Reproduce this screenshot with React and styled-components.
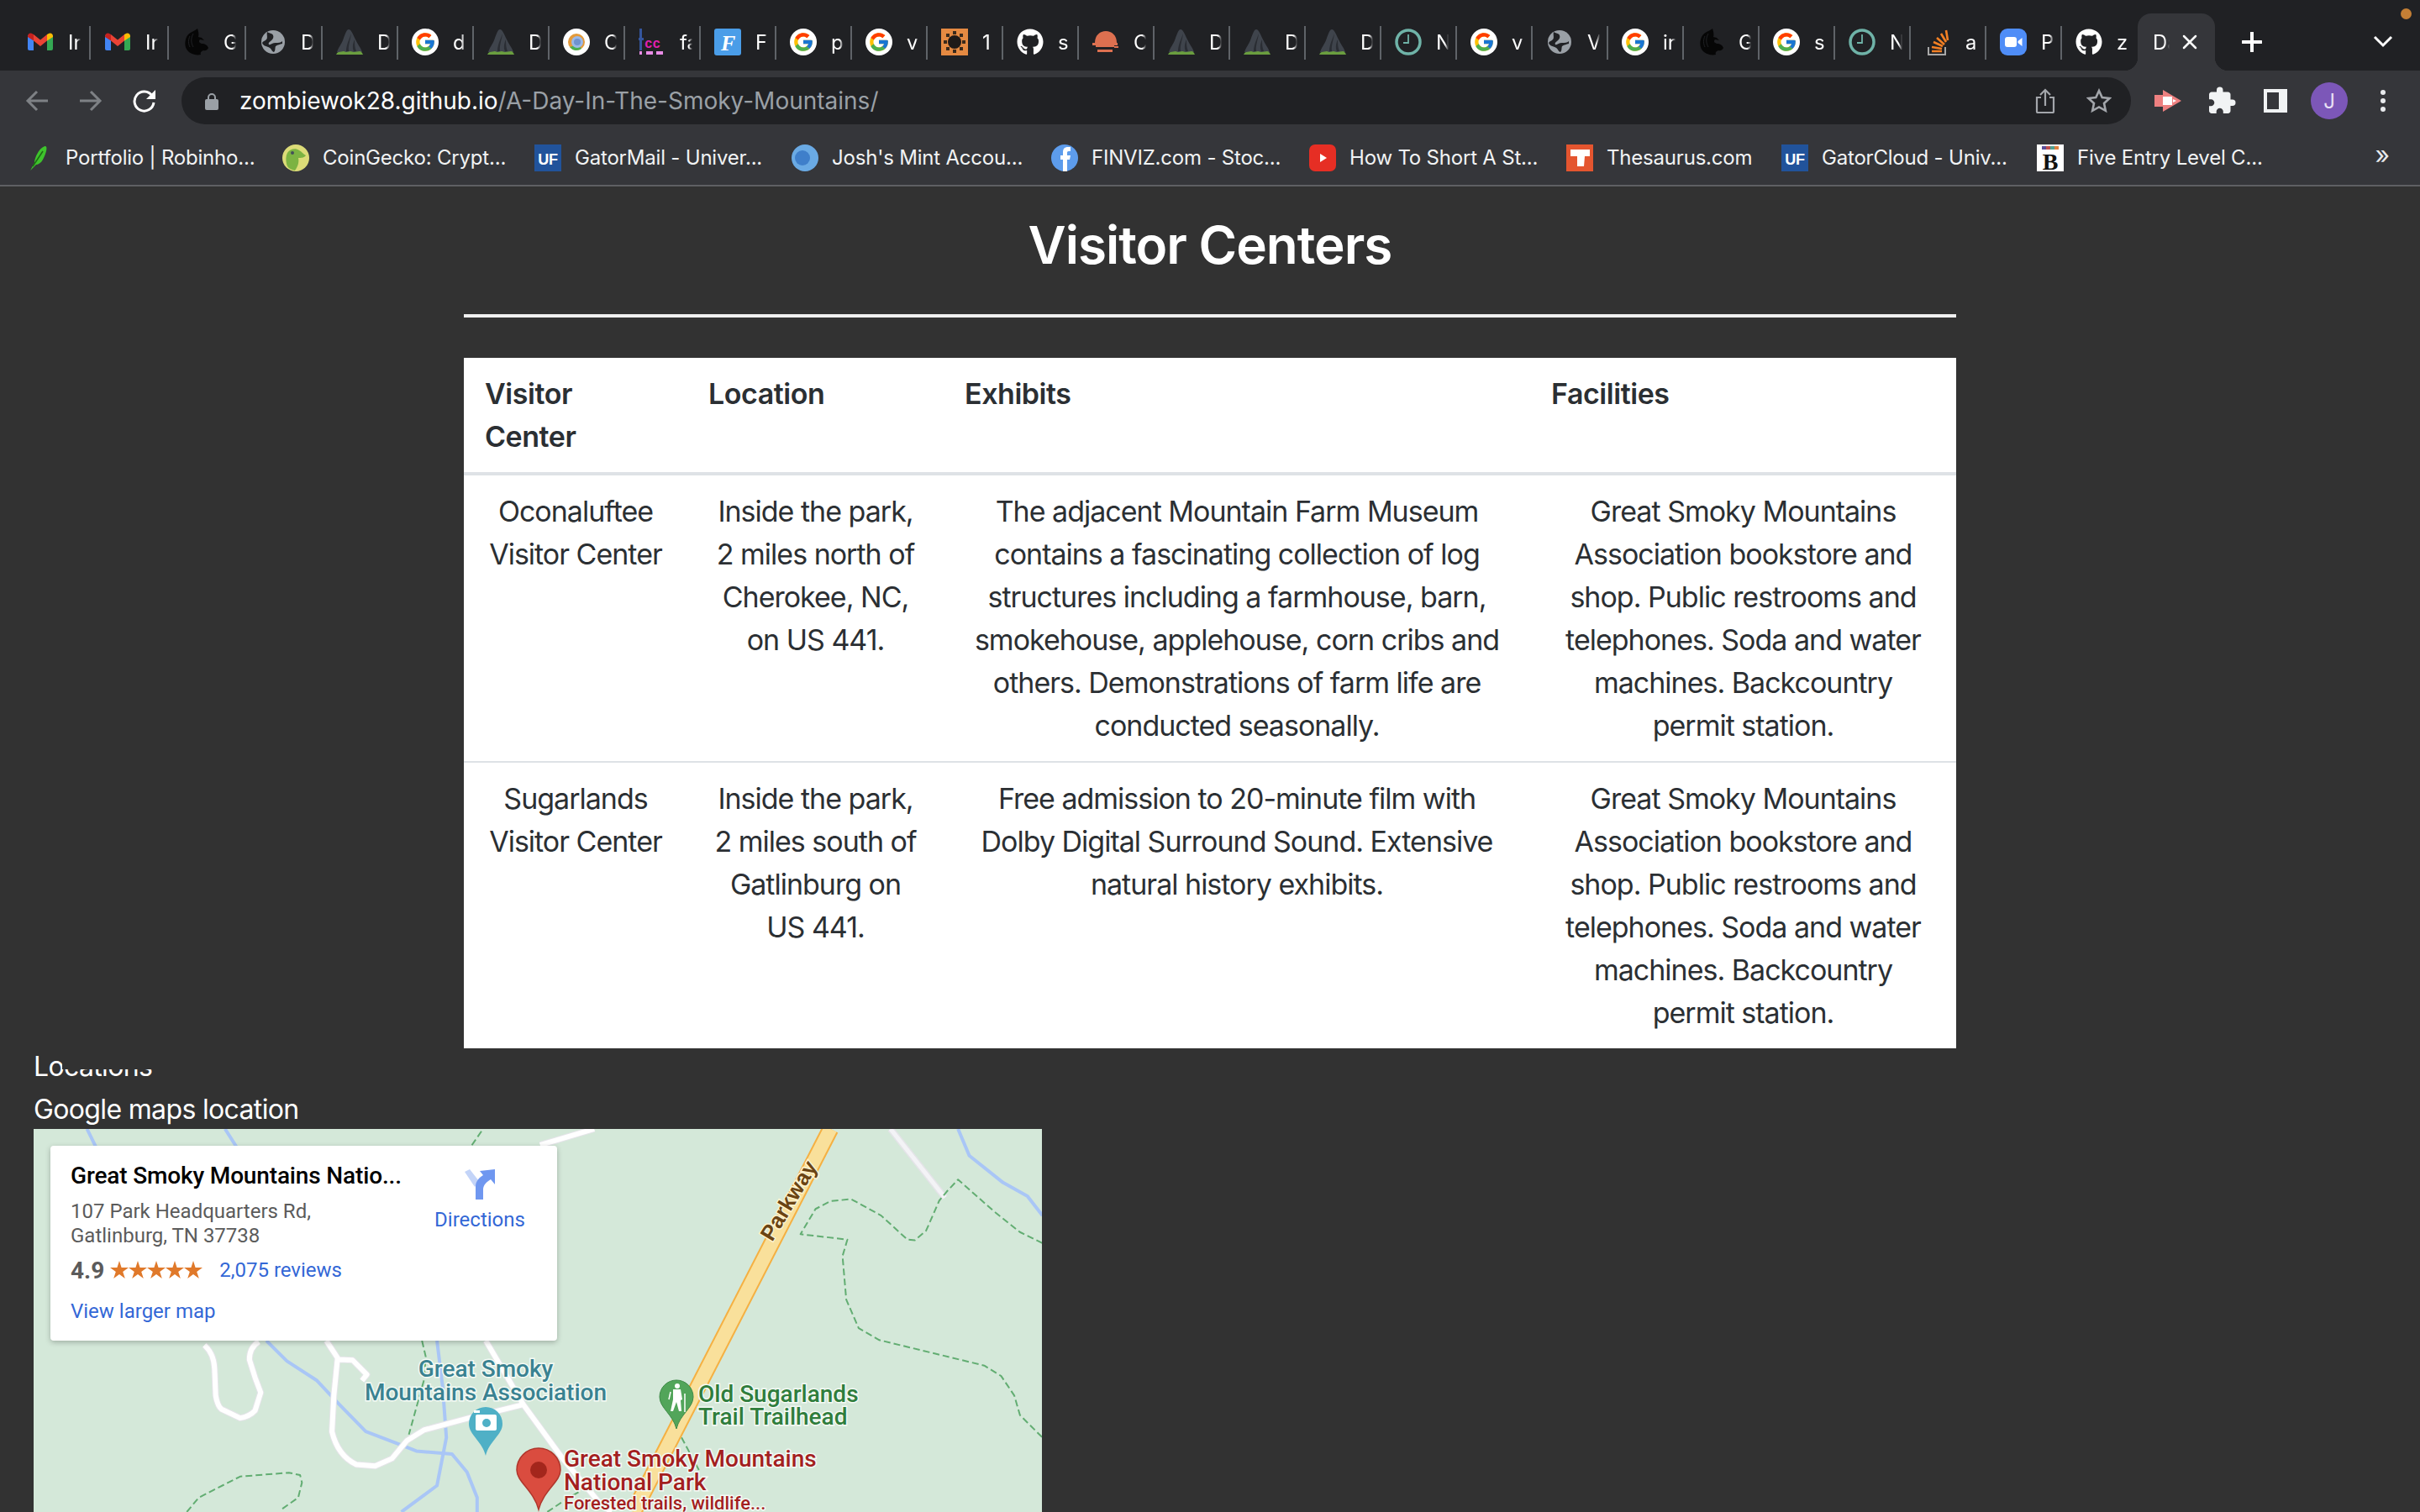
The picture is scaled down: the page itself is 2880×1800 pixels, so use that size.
import styled, { createGlobalStyle } from 'styled-components'
import { FcGoogle } from 'react-icons/fc'
import { FaGithub } from 'react-icons/fa'
import { MdExtension } from 'react-icons/md'

const GlobalStyle = createGlobalStyle`
  html, body {
    margin: 0;
    padding: 0;
    height: 1800px;
    overflow: hidden;
    background: #323232;
    font-family: Inter, "Noto Sans", sans-serif;
    color: #fff;
  }
  * { box-sizing: border-box; }
`

/* ---------- favicons ---------- */

const Icon = styled.svg`
  width: 32px;
  height: 32px;
  flex: none;
  display: block;
`

const Gmail = () => (
  <Icon viewBox="0 0 32 32">
    <path fill="#4285f4" d="M1 8h7v18H3a2 2 0 0 1-2-2z" />
    <path fill="#34a853" d="M24 8h7v16a2 2 0 0 1-2 2h-5z" />
    <path fill="#ea4335" d="M8 7l8 6.5L24 7v7.5L16 21l-8-6.5z" />
    <path fill="#c5221f" d="M1 10V9a3.5 3.5 0 0 1 5.6-2.8L8 7v7.5z" />
    <path fill="#fbbc04" d="M31 10V9a3.5 3.5 0 0 0-5.6-2.8L24 7v7.5z" />
  </Icon>
)

const UfDragon = () => (
  <Icon viewBox="0 0 32 32">
    <path fill="#060606" d="M18 0c-3 3-10 4-13 10-3 7-2 14 3 18 4 3 10 4 14 3-1-2 0-4 3-5 3 1 5-1 6-3-1-3-4-5-8-5-3-1-4-3-2-5l5 1-3-3-4-1c1-3 0-7-1-10z" />
    <path fill="none" stroke="#202124" strokeWidth="1" d="M9 9c-2 4-2 9 0 13M13 6c-3 5-3 11 0 16" />
  </Icon>
)

const Globe = () => (
  <Icon viewBox="0 0 32 32">
    <circle cx="16" cy="16" r="14" fill="#9aa0a6" />
    <path fill="#202124" d="M9 4c2 2 6 1 7 4 1 2 0 5-3 7-2 1-3 3-2 4 2 1 4-2 8-2 3 0 6 0 8-2v3c-3 1-5 1-8 3-1 3 0 5-2 7-2 0-3-4-5-5-3-2-8-2-9-6 1-2 3-2 5-4 2-2 0-6 1-9z" />
  </Icon>
)

const Mountain = () => (
  <Icon viewBox="0 0 32 32">
    <path fill="#3f444c" d="M15 1c3 0 5 6 8 12 2 5 6 9 8 15H1c2-6 5-9 7-14 2-5 4-13 7-13z" />
    <path fill="#2a2d33" d="M18 6c-2 6-6 13-6 21h3c-1-7 2-13 3-21zM22 13c-2 5-3 9-1 14h3c-2-5-2-9-2-14z" />
    <path fill="#6a9e3f" d="M0 31c1-2 2-3 3-3l6-1 3 1 5-1 4 1 7-1c2 0 3 2 4 4z" />
  </Icon>
)

const WhiteDisc = styled.span`
  width: 32px;
  height: 32px;
  flex: none;
  border-radius: 50%;
  background: #fff;
  display: flex;
  align-items: center;
  justify-content: center;
`

const GoogleG = () => (
  <WhiteDisc>
    <FcGoogle size={26} />
  </WhiteDisc>
)

const ChromeDev = () => (
  <Icon viewBox="0 0 32 32">
    <circle cx="16" cy="16" r="16" fill="#fff" />
    <circle cx="16" cy="16" r="10" fill="#e39a3a" />
    <path fill="#4caf50" d="M8 22a10 10 0 0 0 14 2l-4-5z" />
    <circle cx="17" cy="16" r="7" fill="#9ab8e8" />
    <circle cx="17" cy="16" r="4" fill="#6f93cf" />
  </Icon>
)

const FccLogo = () => (
  <Icon viewBox="0 0 32 32">
    <rect x="1" y="0" width="3" height="26" fill="#34559c" />
    <rect x="0" y="11" width="6" height="3" fill="#34559c" />
    <rect x="1" y="27" width="3" height="4" fill="#e98ce6" />
    <text x="7" y="23" fontSize="16" fontWeight="700" fill="#e020b0" fontFamily="Liberation Mono, monospace">cc</text>
    <rect x="9" y="27" width="8" height="4" fill="#e98ce6" />
    <rect x="21" y="27" width="8" height="4" fill="#e98ce6" />
  </Icon>
)

const BlueF = () => (
  <Icon viewBox="0 0 32 32">
    <rect width="32" height="32" rx="3" fill="#4a9de8" />
    <text x="8" y="26" fontSize="26" fontWeight="700" fontStyle="italic" fill="#fff" fontFamily="Liberation Serif, serif">F</text>
  </Icon>
)

const OrangeSun = () => (
  <Icon viewBox="0 0 32 32">
    <rect width="32" height="32" fill="#e58a42" />
    <circle cx="16" cy="16" r="8" fill="#1f1a18" />
    <g fill="#3a2a1c">
      <rect x="14" y="3" width="4" height="4" />
      <rect x="14" y="25" width="4" height="4" />
      <rect x="3" y="14" width="4" height="4" />
      <rect x="25" y="14" width="4" height="4" />
      <rect x="6" y="6" width="4" height="4" />
      <rect x="22" y="6" width="4" height="4" />
      <rect x="6" y="22" width="4" height="4" />
      <rect x="22" y="22" width="4" height="4" />
    </g>
  </Icon>
)

const Github = () => <FaGithub size={32} color="#fff" style={{ flex: 'none' }} />

const Sunset = () => (
  <Icon viewBox="0 0 32 32">
    <path fill="#dd7050" d="M3 17C3 8 9 3 16 3s13 5 13 14z" />
    <rect x="0" y="17" width="30" height="3" fill="#dd7050" />
    <rect x="4" y="20" width="22" height="2" fill="#dd7050" />
    <rect x="26" y="21" width="5" height="2" fill="#dd7050" />
    <rect x="6" y="25" width="18" height="3" fill="#dd7050" />
  </Icon>
)

const Clock = () => (
  <Icon viewBox="0 0 32 32">
    <circle cx="16" cy="16" r="14" fill="none" stroke="#6fb3a8" strokeWidth="3.5" />
    <path d="M16 7v10h-6" fill="none" stroke="#6fb3a8" strokeWidth="1.8" />
  </Icon>
)

const Stack = () => (
  <Icon viewBox="0 0 32 32">
    <path d="M5 22v9h20v-9" fill="none" stroke="#a8a8a8" strokeWidth="2" />
    <g stroke="#f48024" strokeWidth="2.6">
      <path d="M9 27h12M9 22l12 2M11 16l11 5M15 11l9 8M20 6l6 10M26 2l2 12" />
    </g>
  </Icon>
)

const ZoomLogo = () => (
  <Icon viewBox="0 0 32 32">
    <rect width="32" height="32" rx="9" fill="#4f8df7" />
    <rect x="6" y="10" width="14" height="12" rx="3" fill="#fff" />
    <path fill="#fff" d="M21.5 15l5-4v10l-5-4z" />
  </Icon>
)

const Leaf = () => (
  <Icon viewBox="0 0 32 32">
    <path fill="#3ec42c" d="M24 2c3 0 1 9-3 16-2 4-6 6-8 6l-7 7 5-9c0-6 6-19 13-20z" />
    <path stroke="#1d6a14" strokeWidth="1.5" fill="none" d="M9 26L21 8" />
  </Icon>
)

const Gecko = () => (
  <Icon viewBox="0 0 32 32">
    <circle cx="16" cy="16" r="16" fill="#dcdc78" />
    <path fill="#7cb342" d="M6 10c3-5 10-6 14-3 3 1 5 5 8 6-2 3-6 3-9 3 1 4 0 10-4 15-5-1-9-3-10-8-1-5-1-9 1-13z" />
    <circle cx="12" cy="10" r="2" fill="#44505a" />
  </Icon>
)

const UfSquare = () => (
  <Icon viewBox="0 0 32 32">
    <rect width="32" height="32" fill="#21539b" />
    <text x="16" y="24" textAnchor="middle" fontSize="18" fontWeight="700" fill="#fff" fontFamily="Liberation Sans, sans-serif">UF</text>
  </Icon>
)

const Mint = () => (
  <Icon viewBox="0 0 32 32">
    <circle cx="16" cy="16" r="16" fill="#6aaae4" />
    <circle cx="13" cy="16" r="9" fill="#3f7fca" />
  </Icon>
)

const Finviz = () => (
  <Icon viewBox="0 0 32 32">
    <circle cx="16" cy="16" r="16" fill="#5d9cec" />
    <path fill="#fff" d="M14 32V18h-3v-5h3V9c0-4 2-6 6-6h3v5h-2c-2 0-2 1-2 2v3h4l-1 5h-3v14z" />
  </Icon>
)

const Youtube = () => (
  <Icon viewBox="0 0 32 32">
    <rect x="0" y="0" width="32" height="32" rx="7" fill="#e62e24" />
    <path fill="#fff" d="M13 11l8 5-8 5z" />
  </Icon>
)

const Thesaurus = () => (
  <Icon viewBox="0 0 32 32">
    <rect width="32" height="32" fill="#e4552f" />
    <path fill="#fff" d="M5 6h23v8h-6l-1 12h-8V14H5z" />
  </Icon>
)

const BookB = () => (
  <Icon viewBox="0 0 32 32">
    <rect width="32" height="32" fill="#fff" />
    <rect x="6" y="2" width="5" height="4" fill="#5a4f9a" />
    <rect x="11" y="2" width="5" height="4" fill="#c05050" />
    <rect x="16" y="2" width="5" height="4" fill="#50a090" />
    <rect x="21" y="2" width="5" height="4" fill="#e08040" />
    <text x="16" y="30" textAnchor="middle" fontSize="28" fontWeight="700" fill="#111" fontFamily="Liberation Serif, serif">B</text>
  </Icon>
)

/* ---------- tab strip ---------- */

const TabStrip = styled.div`
  position: relative;
  height: 84px;
  background: #202124;
  padding: 16px 0 0 16px;
  display: flex;
  align-items: stretch;
`

const Tab = styled.div`
  position: relative;
  width: ${({ $w }) => $w}px;
  flex: none;
  display: flex;
  align-items: center;
  gap: 17px;
  padding-left: 16px;

  &::after {
    content: '';
    display: ${({ $last }) => ($last ? 'none' : 'block')};
    position: absolute;
    right: 0;
    top: 15px;
    width: 2px;
    height: 40px;
    background: #5f6368;
  }
`

const TabTitle = styled.span`
  width: 15px;
  overflow: hidden;
  white-space: nowrap;
  font-size: 24px;
  color: #fff;
  -webkit-mask-image: linear-gradient(to right, #000 70%, transparent);
  mask-image: linear-gradient(to right, #000 70%, transparent);
`

const ActiveTab = styled.div`
  position: relative;
  width: 92px;
  flex: none;
  background: #35363a;
  border-radius: 16px 16px 0 0;
  display: flex;
  align-items: center;
  padding-left: 18px;

  &::before, &::after {
    content: '';
    position: absolute;
    bottom: 0;
    width: 16px;
    height: 16px;
  }
  &::before {
    left: -16px;
    background: radial-gradient(circle at 0 0, transparent 16px, #35363a 16.5px);
  }
  &::after {
    right: -16px;
    background: radial-gradient(circle at 100% 0, transparent 16px, #35363a 16.5px);
  }
`

const ActiveTitle = styled(TabTitle)`
  width: 20px;
  margin-right: 14px;
`

const StripGlyph = styled.svg`
  flex: none;
  display: block;
`

const NewTab = styled(StripGlyph)`
  margin: 22px 0 0 32px;
`

const TabSearch = styled(StripGlyph)`
  position: absolute;
  left: 2818px;
  top: 37px;
`

const WindowDot = styled.span`
  position: absolute;
  left: 2857px;
  top: 10px;
  width: 13px;
  height: 13px;
  border-radius: 50%;
  background: #c47f35;
`

/* ---------- toolbar ---------- */

const Toolbar = styled.div`
  height: 64px;
  background: #35363a;
  padding: 8px 12px 0;
  display: flex;
  align-items: stretch;
`

const ToolButton = styled.div`
  width: 64px;
  flex: none;
  display: flex;
  align-items: center;
  justify-content: center;
`

const AddressBar = styled.div`
  flex: 1;
  margin: 0 12px;
  border-radius: 28px;
  background: #202124;
  display: flex;
  align-items: center;
  padding: 0 6px 0 28px;
`

const Url = styled.div`
  flex: 1;
  margin-left: 25px;
  font-size: 28px;
  color: #fff;
  white-space: nowrap;
`

const UrlPath = styled.span`
  color: #9aa0a6;
`

const Avatar = styled.span`
  width: 44px;
  height: 44px;
  border-radius: 50%;
  background: #7c57b8;
  color: #e8e0f5;
  font-size: 24px;
  display: flex;
  align-items: center;
  justify-content: center;
`

const BarIcon = styled.div`
  width: 64px;
  flex: none;
  display: flex;
  justify-content: center;
`

/* ---------- bookmarks ---------- */

const BookmarkBar = styled.div`
  position: relative;
  height: 74px;
  background: #35363a;
  border-bottom: 2px solid #5f6063;
  padding: 7px 0 0 30px;
  display: flex;
  align-items: center;
`

const Bookmark = styled.div`
  width: ${({ $w }) => $w}px;
  flex: none;
  display: flex;
  align-items: center;
  gap: 16px;
  font-size: 24px;
  letter-spacing: -0.2px;
  color: #f1f3f4;
  white-space: nowrap;
`

const MoreBookmarks = styled.span`
  position: absolute;
  right: 36px;
  top: 18px;
  font-size: 30px;
  color: #e8eaed;
`

/* ---------- page ---------- */

const Section = styled.section`
  width: 1776px;
  margin: 0 auto;
`

const Title = styled.h1`
  margin: 0;
  padding-top: 31px;
  height: 152px;
  font-size: 62px;
  line-height: 78px;
  font-weight: 600;
  letter-spacing: -1px;
  text-align: center;
  color: #fff;
`

const Rule = styled.hr`
  margin: 0 0 48px;
  border: 0;
  height: 4px;
  background: #f0f0f0;
`

const Table = styled.table`
  width: 100%;
  table-layout: fixed;
  border-collapse: collapse;
  background: #fff;
  color: #2b2f33;
  font-size: 34px;
  line-height: 51px;
  letter-spacing: -1px;
`

const HeadCell = styled.th`
  padding: 17px 25px;
  text-align: left;
  vertical-align: top;
  font-weight: 600;
  letter-spacing: -0.45px;
  border-bottom: 4px solid #dee2e6;
`

const Cell = styled.td`
  padding: 17px 25px;
  text-align: center;
  vertical-align: top;
  font-weight: 400;
`

const Row = styled.tr`
  &:not(:last-child) td {
    border-bottom: 2px solid #dee2e6;
  }
`

const LocationBlock = styled.section`
  margin-top: -6px;
  padding-left: 40px;
`

const LocationLine = styled.div`
  height: 51px;
  padding-top: 4px;
  font-size: 32px;
  line-height: 47px;
  letter-spacing: -0.65px;
  color: #fff;
`

const ClippedLine = styled(LocationLine)`
  position: relative;

  &::after {
    content: '';
    position: absolute;
    left: 34px;
    top: 0;
    width: 130px;
    height: 31px;
    background: #323232;
  }
`

/* ---------- map ---------- */

const MapFrame = styled.div`
  position: relative;
  width: 1200px;
  height: 456px;
  overflow: hidden;
  background: #d4e8d9;
  font-family: Roboto, sans-serif;
`

const MapSvg = styled.svg`
  display: block;
`

const MapLine = styled.path`
  fill: none;
  vector-effect: non-scaling-stroke;
  stroke: ${({ $c }) => $c};
  stroke-width: ${({ $w }) => $w}px;
  stroke-dasharray: ${({ $dash }) => $dash || 'none'};
  stroke-linejoin: round;
`

const MapLabel = styled.text`
  font-family: Roboto, sans-serif;
  font-size: ${({ $size }) => $size || 28}px;
  font-weight: 500;
  fill: ${({ $c }) => $c};
  stroke: #f4faf5;
  stroke-width: 3px;
  paint-order: stroke;
`

const RoadName = styled.text`
  font-family: "Liberation Sans", sans-serif;
  font-size: 26px;
  font-weight: 700;
  fill: #6b4413;
  stroke: #fdf3d0;
  stroke-width: 3px;
  paint-order: stroke;
`

const InfoCard = styled.div`
  position: absolute;
  left: 20px;
  top: 20px;
  width: 603px;
  height: 232px;
  background: #fff;
  border-radius: 4px;
  box-shadow: 0 2px 6px rgba(0, 0, 0, 0.25);
  padding: 20px 0 0 24px;
  display: flex;
`

const CardMain = styled.div`
  width: 417px;
  flex: none;
`

const CardTitle = styled.div`
  font-size: 28px;
  line-height: 32px;
  font-weight: 500;
  letter-spacing: -0.15px;
  color: #000;
  white-space: nowrap;
`

const CardAddress = styled.div`
  margin-top: 12px;
  font-size: 24px;
  line-height: 29px;
  color: #5b5b5b;
`

const RatingRow = styled.div`
  margin-top: 10px;
  height: 32px;
  display: flex;
  align-items: center;
`

const RatingValue = styled.span`
  font-size: 28px;
  font-weight: 700;
  color: #5b5b5b;
  margin-right: 7px;
`

const Stars = styled.svg`
  flex: none;
  display: block;
  margin-right: 20px;
`

const CardLink = styled.a`
  font-size: 24px;
  line-height: 32px;
  color: #3367d6;
`

const LargerMap = styled(CardLink)`
  display: block;
  margin-top: 17px;
`

const DirectionsBlock = styled.div`
  width: 140px;
  flex: none;
  padding-top: 8px;
  display: flex;
  flex-direction: column;
  align-items: center;
  gap: 8px;
`

const MapDrawing = () => (
  <MapSvg width="1200" height="456" viewBox="0 0 1200 456">
    <g transform="translate(-40,-104) scale(.4464,.3571)">
      <MapLine $c="#a9c6f6" $w={4} d="M232 291L255 350M600 291L630 350" />
      <MapLine $c="#a9c6f6" $w={4} d="M710 997L765 1065L845 1130L905 1210L975 1300L1060 1340L1110 1365L1205 1375L1245 1435L1272 1520L1272 1568" />
      <MapLine $c="#a9c6f6" $w={4} d="M1165 997L1180 1150L1190 1320L1165 1480L1070 1568" />
      <MapLine $c="#62ad72" $w={2} $dash="8 4" d="M1258 345L1288 291M1125 997L1135 1050L1130 1130L1090 1310M498 1568L530 1520L640 1450L770 1437L800 1445L805 1470L795 1520L750 1560" />
      <MapLine $c="#e4e4e8" $w={8} d="M545 1012Q570 1040 572 1090L575 1180Q580 1215 590 1225L640 1255Q665 1250 680 1230L695 1170L680 1120L665 1060Q665 1020 690 1000" />
      <MapLine $c="#fff" $w={6} d="M545 1012Q570 1040 572 1090L575 1180Q580 1215 590 1225L640 1255Q665 1250 680 1230L695 1170L680 1120L665 1060Q665 1020 690 1000" />
      <MapLine $c="#e4e4e8" $w={8} d="M870 997L900 1055L890 1180L885 1300Q900 1380 950 1410L1000 1415L1045 1390L1085 1330L1130 1295L1250 1255L1395 1210M905 1060L940 1062L978 1110L965 1130M1295 997L1395 1210L1500 1390L1600 1540L1630 1568M1440 345L1584 291" />
      <MapLine $c="#fff" $w={6} d="M870 997L900 1055L890 1180L885 1300Q900 1380 950 1410L1000 1415L1045 1390L1085 1330L1130 1295L1250 1255L1395 1210M905 1060L940 1062L978 1110L965 1130M1295 997L1395 1210L1500 1390L1600 1540L1630 1568M1440 345L1584 291" />
    </g>
    <g transform="translate(560,-104) scale(.4464,.3571)">
      <MapLine $c="#a9c6f6" $w={4} d="M1210 291L1240 380L1330 470L1395 515L1435 580" />
      <MapLine $c="#e4e4e8" $w={8} d="M1030 291L1175 520" />
      <MapLine $c="#f3f3f6" $w={5} d="M1030 291L1175 520" />
      <MapLine $c="#62ad72" $w={2} $dash="8 4" d="M1435 672L1375 635L1305 565L1210 460L1180 500L1160 530L1125 630L1095 662L1075 660L1005 580L925 525L870 532L830 558L790 642L915 660L902 715L912 860L945 955L1000 995L1280 1080L1325 1115L1360 1180L1375 1245L1435 1320M460 1290L520 1430M115 1568L160 1530L205 1497" />
      <MapLine $c="#f5b042" $w={20} d="M870 291L345 1568" />
      <MapLine $c="#f9e09b" $w={16} d="M870 291L345 1568" />
    </g>
    <RoadName transform="translate(879,135) rotate(-59)">Parkway</RoadName>
    <MapLabel $c="#3a8291" x="538" y="295" textAnchor="middle">Great Smoky</MapLabel>
    <MapLabel $c="#3a8291" x="538" y="323" textAnchor="middle">Mountains Association</MapLabel>
    <MapLabel $c="#2f7d3c" x="791" y="325">Old Sugarlands</MapLabel>
    <MapLabel $c="#2f7d3c" x="791" y="352">Trail Trailhead</MapLabel>
    <MapLabel $c="#a31f1f" x="631" y="402">Great Smoky Mountains</MapLabel>
    <MapLabel $c="#a31f1f" x="631" y="430">National Park</MapLabel>
    <MapLabel $c="#a31f1f" x="631" y="453" $size={22}>Forested trails, wildlife...</MapLabel>
    <path fill="#52a55a" stroke="#3f8a48" strokeWidth="1" d="M765 357C761 340 745 332 745 319A20 20 0 0 1 785 319C785 332 769 340 765 357Z" />
    <circle cx="766" cy="306" r="3" fill="#fff" />
    <path fill="#fff" d="M761 310h9l2 12-2 1 1 13h-3l-3-11-4 11h-3l3-14z" />
    <path stroke="#fff" strokeWidth="1.5" d="M775 315v22M758 313l-2 9" />
    <path fill="#4fb0c6" d="M538 389C534 372 518 364 518 351A20 20 0 0 1 558 351C558 364 542 372 538 389Z" />
    <rect x="526" y="340" width="25" height="19" rx="2" fill="#fff" />
    <circle cx="539" cy="350" r="5" fill="#4fb0c6" />
    <rect x="524" y="335" width="7" height="3" fill="#fff" />
    <path fill="#da4c3f" stroke="#b0362c" strokeWidth="1.5" d="M601 453C595 430 575 420 575 406A26 26 0 0 1 627 406C627 420 607 430 601 453Z" />
    <ellipse cx="601" cy="406" rx="10" ry="10" fill="#a3261c" />
  </MapSvg>
)

/* ---------- data ---------- */

const tabs = [
  [Gmail, 'In', 92], [Gmail, 'In', 93], [UfDragon, 'G', 92], [Globe, 'D', 91], [Mountain, 'D', 90],
  [GoogleG, 'd', 90], [Mountain, 'D', 90], [ChromeDev, 'C', 90], [FccLogo, 'fa', 90], [BlueF, 'F', 90],
  [GoogleG, 'p', 90], [GoogleG, 'v', 90], [OrangeSun, '1', 90], [Github, 's', 90], [Sunset, 'C', 90],
  [Mountain, 'D', 90], [Mountain, 'D', 90], [Mountain, 'D', 90], [Clock, 'N', 90], [GoogleG, 'v', 90],
  [Globe, 'V', 90], [GoogleG, 'in', 90], [UfDragon, 'G', 90], [GoogleG, 's', 90], [Clock, 'N', 90],
  [Stack, 'a', 90], [ZoomLogo, 'P', 90], [Github, 'z', 90],
]

const bookmarks = [
  [Leaf, 'Portfolio | Robinho...', 306],
  [Gecko, 'CoinGecko: Crypt...', 300],
  [UfSquare, 'GatorMail - Univer...', 306],
  [Mint, "Josh's Mint Accou...", 309],
  [Finviz, 'FINVIZ.com - Stoc...', 307],
  [Youtube, 'How To Short A St...', 306],
  [Thesaurus, 'Thesaurus.com', 256],
  [UfSquare, 'GatorCloud - Univ...', 304],
  [BookB, 'Five Entry Level C...', 300],
]

const facilities = 'Great Smoky Mountains Association bookstore and shop. Public restrooms and telephones. Soda and water machines. Backcountry permit station.'

const starShape = 'M11 0l2.6 8H22l-6.800 5 2.600 8L11 16l-6.800 5 2.600-8L0 8h8.400z'

const App = () => (
  <>
    <GlobalStyle />
    <TabStrip>
      {tabs.map(([Fav, title, w], i) => (
        <Tab key={i} $w={w} $last={i === tabs.length - 1}>
          <Fav />
          <TabTitle>{title}</TabTitle>
        </Tab>
      ))}
      <ActiveTab>
        <ActiveTitle>Da</ActiveTitle>
        <StripGlyph width="20" height="20" viewBox="0 0 20 20">
          <path d="M3 3l14 14M17 3L3 17" stroke="#fff" strokeWidth="2.5" strokeLinecap="round" />
        </StripGlyph>
      </ActiveTab>
      <NewTab width="24" height="24" viewBox="0 0 24 24">
        <path d="M12 1v22M1 12h22" stroke="#fff" strokeWidth="4" strokeLinecap="round" />
      </NewTab>
      <TabSearch width="36" height="26" viewBox="0 0 36 26">
        <path d="M8 7l10 10L28 7" fill="none" stroke="#fff" strokeWidth="3" />
      </TabSearch>
      <WindowDot />
    </TabStrip>

    <Toolbar>
      <ToolButton>
        <svg width="28" height="26" viewBox="0 0 28 26">
          <path d="M27 13H3M14 2L3 13l11 11" fill="none" stroke="#7e8185" strokeWidth="3" />
        </svg>
      </ToolButton>
      <ToolButton>
        <svg width="28" height="26" viewBox="0 0 28 26">
          <path d="M1 13h24M14 2l11 11-11 11" fill="none" stroke="#7e8185" strokeWidth="3" />
        </svg>
      </ToolButton>
      <ToolButton>
        <svg width="28" height="28" viewBox="0 0 28 28">
          <path d="M23 8a11.5 11.5 0 1 0 2 8" fill="none" stroke="#fff" strokeWidth="3" />
          <path d="M27 1v11H16z" fill="#fff" />
        </svg>
      </ToolButton>
      <AddressBar>
        <svg width="16" height="21" viewBox="0 0 16 21">
          <path d="M4 9V6a4 4 0 0 1 8 0v3" fill="none" stroke="#9aa0a6" strokeWidth="2" />
          <rect y="8" width="16" height="13" rx="2" fill="#9aa0a6" />
        </svg>
        <Url>
          zombiewok28.github.io<UrlPath>/A-Day-In-The-Smoky-Mountains/</UrlPath>
        </Url>
        <BarIcon>
          <svg width="24" height="30" viewBox="0 0 24 30">
            <path d="M7 11H2v17a1 1 0 0 0 1 1h18a1 1 0 0 0 1-1V11h-5M12 21V2M6 8l6-6 6 6" fill="none" stroke="#a3a6ab" strokeWidth="2.2" />
          </svg>
        </BarIcon>
        <BarIcon>
          <svg width="30" height="30" viewBox="0 0 30 30">
            <path d="M15 3l3.7 8 8.800 1-6.500 6 1.800 8.800L15 22.400l-7.800 4.400L9 18l-6.500-6 8.800-1z" fill="none" stroke="#a3a6ab" strokeWidth="2.6" />
          </svg>
        </BarIcon>
      </AddressBar>
      <ToolButton>
        <svg width="32" height="26" viewBox="0 0 32 26">
          <path d="M10 0l22 13-22 13v-6H0V6h10z" fill="#ee8080" />
          <rect x="10" y="8" width="11" height="10" fill="#fff" />
          <path d="M22 11l4 2-4 2z" fill="#fff" />
        </svg>
      </ToolButton>
      <ToolButton>
        <MdExtension size={36} color="#f1f3f4" />
      </ToolButton>
      <ToolButton>
        <svg width="28" height="28" viewBox="0 0 28 28">
          <path fillRule="evenodd" d="M0 0h28v28H0zM4 4v20h14V4z" fill="#f1f3f4" />
        </svg>
      </ToolButton>
      <ToolButton>
        <Avatar>J</Avatar>
      </ToolButton>
      <ToolButton>
        <svg width="6" height="26" viewBox="0 0 6 26">
          <circle cx="3" cy="3" r="3" fill="#e8eaed" />
          <circle cx="3" cy="13" r="3" fill="#e8eaed" />
          <circle cx="3" cy="23" r="3" fill="#e8eaed" />
        </svg>
      </ToolButton>
    </Toolbar>

    <BookmarkBar>
      {bookmarks.map(([Fav, label, w], i) => (
        <Bookmark key={i} $w={w}>
          <Fav />
          {label}
        </Bookmark>
      ))}
      <MoreBookmarks>»</MoreBookmarks>
    </BookmarkBar>

    <Section>
      <Title>Visitor Centers</Title>
      <Rule />
      <Table>
        <colgroup>
          <col width="266" />
          <col width="305" />
          <col width="698" />
          <col width="507" />
        </colgroup>
        <thead>
          <tr>
            <HeadCell>Visitor Center</HeadCell>
            <HeadCell>Location</HeadCell>
            <HeadCell>Exhibits</HeadCell>
            <HeadCell>Facilities</HeadCell>
          </tr>
        </thead>
        <tbody>
          <Row>
            <Cell>Oconaluftee Visitor Center</Cell>
            <Cell>Inside the park, 2 miles north of Cherokee, NC, on US 441.</Cell>
            <Cell>The adjacent Mountain Farm Museum contains a fascinating collection of log structures including a farmhouse, barn, smokehouse, applehouse, corn cribs and others. Demonstrations of farm life are conducted seasonally.</Cell>
            <Cell>{facilities}</Cell>
          </Row>
          <Row>
            <Cell>Sugarlands Visitor Center</Cell>
            <Cell>Inside the park, 2 miles south of Gatlinburg on US 441.</Cell>
            <Cell>Free admission to 20-minute film with Dolby Digital Surround Sound. Extensive natural history exhibits.</Cell>
            <Cell>{facilities}</Cell>
          </Row>
        </tbody>
      </Table>
    </Section>

    <LocationBlock>
      <ClippedLine>Locations</ClippedLine>
      <LocationLine>Google maps location</LocationLine>
      <MapFrame>
        <MapDrawing />
        <InfoCard>
          <CardMain>
            <CardTitle>Great Smoky Mountains Natio...</CardTitle>
            <CardAddress>
              107 Park Headquarters Rd,
              <br />
              Gatlinburg, TN 37738
            </CardAddress>
            <RatingRow>
              <RatingValue>4.9</RatingValue>
              <Stars width="110" height="22" viewBox="0 0 110 22">
                {[0, 22, 44, 66, 88].map((x) => (
                  <path key={x} transform={`translate(${x},0)`} d={starShape} fill="#e0792a" />
                ))}
              </Stars>
              <CardLink>2,075 reviews</CardLink>
            </RatingRow>
            <LargerMap>View larger map</LargerMap>
          </CardMain>
          <DirectionsBlock>
            <svg width="36" height="36" viewBox="0 0 36 36">
              <path d="M0 3l6-3 11 14-5 7z" fill="#c3d4f8" />
              <path d="M13 36V20c0-5 4-10 9-13l-4-5 18-2v18l-5-6c-5 3-9 7-9 12v16z" fill="#6f97f0" />
            </svg>
            <CardLink>Directions</CardLink>
          </DirectionsBlock>
        </InfoCard>
      </MapFrame>
    </LocationBlock>
  </>
)

export default App
